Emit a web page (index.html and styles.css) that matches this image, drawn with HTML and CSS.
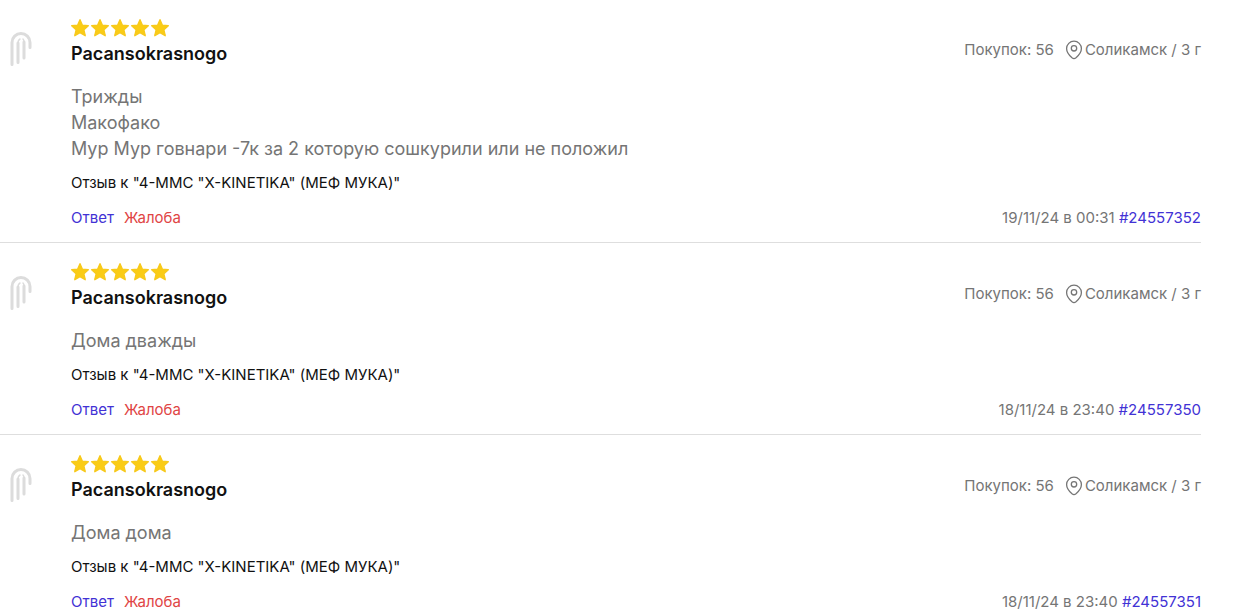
FILE: index.html
```
<!DOCTYPE html>
<html lang="ru">
<head>
<meta charset="utf-8">
<meta name="viewport" content="width=device-width, initial-scale=1">
<title>Отзывы</title>
<link rel="stylesheet" href="styles.css">
</head>
<body>
<svg class="sprite" aria-hidden="true">
  <symbol id="star" viewBox="0 0 20 20"><path d="M10 1.7 12.4 7.2 18.3 7.8 13.9 11.8 15.2 17.7 10 14.7 4.8 17.7 6.1 11.8 1.7 7.8 7.6 7.2Z" fill="#facc15" stroke="#f7c91c" stroke-width="1.4" stroke-linejoin="round"/></symbol>
  <symbol id="stars" viewBox="0 0 100 20"><use href="#star" width="20" height="20"/><use href="#star" x="20" width="20" height="20"/><use href="#star" x="40" width="20" height="20"/><use href="#star" x="60" width="20" height="20"/><use href="#star" x="80" width="20" height="20"/></symbol>
  <symbol id="avatar" viewBox="0 0 24 36"><g fill="none" stroke="#dcdcdc" stroke-width="3" stroke-linecap="round"><path d="M3 33.500V11.500a9 9 0 0 1 18 0V16.500M9 31.500V12M15 27V11"/><path d="M9 12Q9 9 11 8M15 11Q15 9 14 8" stroke-width="1.500"/></g></symbol>
  <symbol id="pin" viewBox="0 0 18 20"><g fill="none" stroke="#757575" stroke-width="1.300"><path d="M9 1.200a7.400 7.400 0 0 1 7.400 7.400c0 3.500-2.300 6.600-5.400 9.200q-2 1.500-4 0C3.900 15.200 1.600 12.100 1.600 8.600A7.400 7.400 0 0 1 9 1.200Z"/><circle cx="9" cy="8.300" r="2.700"/></g></symbol>
</svg>
<main class="reviews">
  <article class="review">
    <svg class="avatar" aria-hidden="true"><use href="#avatar"/></svg>
    <div class="content">
      <header class="head">
        <div class="author">
          <svg class="stars" role="img" aria-label="5 из 5"><use href="#stars"/></svg>
          <h2 class="name">Pacansokrasnogo</h2>
        </div>
        <div class="meta"><span>Покупок: 56</span><span class="place"><svg class="pin" aria-hidden="true"><use href="#pin"/></svg>Соликамск / 3 г</span></div>
      </header>
      <p class="text">Трижды<br>Макофако<br>Мур Мур говнари -7к за 2 которую сошкурили или не положил</p>
      <p class="product">Отзыв к "4-ММС "X-KINETIKA" (МЕФ МУКА)"</p>
      <footer class="foot">
        <div class="actions"><a class="link" href="#">Ответ</a><a class="complain" href="#">Жалоба</a></div>
        <div>19/11/24 в 00:31 <a class="link" href="#">#24557352</a></div>
      </footer>
    </div>
  </article>
  <article class="review">
    <svg class="avatar" aria-hidden="true"><use href="#avatar"/></svg>
    <div class="content">
      <header class="head">
        <div class="author">
          <svg class="stars" role="img" aria-label="5 из 5"><use href="#stars"/></svg>
          <h2 class="name">Pacansokrasnogo</h2>
        </div>
        <div class="meta"><span>Покупок: 56</span><span class="place"><svg class="pin" aria-hidden="true"><use href="#pin"/></svg>Соликамск / 3 г</span></div>
      </header>
      <p class="text">Дома дважды</p>
      <p class="product">Отзыв к "4-ММС "X-KINETIKA" (МЕФ МУКА)"</p>
      <footer class="foot">
        <div class="actions"><a class="link" href="#">Ответ</a><a class="complain" href="#">Жалоба</a></div>
        <div>18/11/24 в 23:40 <a class="link" href="#">#24557350</a></div>
      </footer>
    </div>
  </article>
  <article class="review">
    <svg class="avatar" aria-hidden="true"><use href="#avatar"/></svg>
    <div class="content">
      <header class="head">
        <div class="author">
          <svg class="stars" role="img" aria-label="5 из 5"><use href="#stars"/></svg>
          <h2 class="name">Pacansokrasnogo</h2>
        </div>
        <div class="meta"><span>Покупок: 56</span><span class="place"><svg class="pin" aria-hidden="true"><use href="#pin"/></svg>Соликамск / 3 г</span></div>
      </header>
      <p class="text">Дома дома</p>
      <p class="product">Отзыв к "4-ММС "X-KINETIKA" (МЕФ МУКА)"</p>
      <footer class="foot">
        <div class="actions"><a class="link" href="#">Ответ</a><a class="complain" href="#">Жалоба</a></div>
        <div>18/11/24 в 23:40 <a class="link" href="#">#24557351</a></div>
      </footer>
    </div>
  </article>
</main>
</body>
</html>
```
FILE: styles.css
```
* { box-sizing: border-box; }
body {
  margin: 0;
  background: #fff;
  color: #757575;
  font: 15px/20px Inter, "Liberation Sans", sans-serif;
}
.sprite { position: absolute; width: 0; height: 0; }
.reviews { margin-right: 34px; }
.review {
  display: flex;
  gap: 38px;
  padding: 19px 0 14px 9px;
  border-bottom: 1px solid #dedede;
}
.review:first-child { padding-top: 18px; }
.review:last-child { padding-bottom: 0; border-bottom: 0; }
.avatar { flex: none; width: 24px; height: 36px; margin-top: 13px; }
.content { flex: 1; min-width: 0; }
.head { display: flex; justify-content: space-between; align-items: center; }
.stars { display: block; width: 100px; height: 20px; margin-left: -1px; }
.name {
  margin: 3px 0 0;
  color: #111;
  font-size: 18px;
  line-height: 26px;
  font-weight: 600;
}
.meta { display: flex; gap: 11px; padding-top: 14px; }
.place { display: flex; align-items: center; gap: 2px; }
.pin { width: 18px; height: 20px; }
.text { margin: 17px 0 0; font-size: 18px; line-height: 26px; }
.product { margin: 11px 0 0; color: #111; }
.foot { display: flex; justify-content: space-between; margin-top: 15px; }
.actions { display: flex; gap: 10px; }
.link, .complain { text-decoration: none; }
.link { color: #4232d5; }
.complain { color: #df4545; }
```
